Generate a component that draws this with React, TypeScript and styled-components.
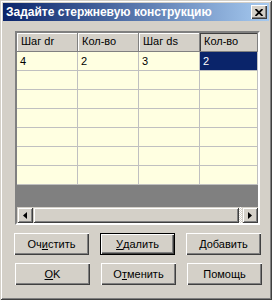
import React from 'react';
import styled, { createGlobalStyle } from 'styled-components';

const Global = createGlobalStyle`
  body {
    margin: 0;
    background: #d4d0c8;
    font-family: 'Liberation Sans', Arial, sans-serif;
    font-size: 11px;
  }
`;

const Window = styled.div`
  width: 272px;
  height: 300px;
  box-sizing: border-box;
  padding: 3px;
  background: #d4d0c8;
  box-shadow: inset 1px 1px #d4d0c8, inset -1px -1px #404040, inset 2px 2px #fff,
    inset -2px -2px #808080;
  display: flex;
  flex-flow: column;
`;

const TitleBar = styled.div`
  height: 18px;
  display: flex;
  align-items: center;
  justify-content: space-between;
  padding: 0 2px 0 3px;
  background: linear-gradient(to right, #0a246a, #a6caf0);
`;

const Title = styled.div`
  color: #fff;
  font-weight: bold;
  font-size: 12px;
  white-space: nowrap;
`;

const CloseButton = styled.div`
  width: 16px;
  height: 14px;
  box-sizing: border-box;
  background: #d4d0c8;
  box-shadow: inset 1px 1px #fff, inset -1px -1px #404040, inset -2px -2px #808080;
  display: flex;
  align-items: center;
  justify-content: center;
`;

const Grid = styled.div`
  margin: 10px 0 0 12px;
  width: 245px;
  height: 194px;
  box-sizing: border-box;
  border-style: solid;
  border-width: 2px;
  border-color: #808080 #fff #fff #808080;
  display: flex;
  flex-flow: column;
  background: #808080;
  position: relative;
`;

const Row = styled.div`
  display: flex;
  height: 19px;
  flex: none;
`;

const HeaderCell = styled.div<{ $w: number; $current?: boolean }>`
  width: ${(p) => p.$w}px;
  box-sizing: border-box;
  padding: 2px 0 0 4px;
  background: #d4d0c8;
  border-right: 1px solid #808080;
  border-bottom: 1px solid #808080;
  box-shadow: ${(p) =>
    p.$current ? 'inset 1px 1px #404040' : 'inset 1px 1px #fff'};
  color: #000;
  white-space: nowrap;
`;

const Cell = styled.div<{ $w: number; $selected?: boolean }>`
  width: ${(p) => p.$w}px;
  box-sizing: border-box;
  padding: 3px 0 0 3px;
  background: ${(p) => (p.$selected ? '#0a246a' : '#ffffe1')};
  color: ${(p) => (p.$selected ? '#fff' : '#000')};
  border-right: 1px solid #c0c0c0;
  border-bottom: 1px solid #c0c0c0;
`;

const Filler = styled.div`
  flex: 1;
  background: #808080;
`;

const ScrollBar = styled.div`
  height: 16px;
  display: flex;
  background: #d4d0c8;
  flex: none;
`;

const ScrollButton = styled.div`
  width: 16px;
  height: 16px;
  box-sizing: border-box;
  background: #d4d0c8;
  box-shadow: inset 1px 1px #d4d0c8, inset -1px -1px #404040, inset 2px 2px #fff,
    inset -2px -2px #808080;
  display: flex;
  align-items: center;
  justify-content: center;
`;

const Thumb = styled.div`
  flex: 1;
  height: 16px;
  box-sizing: border-box;
  box-shadow: inset 1px 1px #d4d0c8, inset -1px -1px #404040, inset 2px 2px #fff,
    inset -2px -2px #808080;
`;

const Dither = styled.div`
  width: 3px;
  background: repeating-conic-gradient(#fff 0 25%, #d4d0c8 0 50%) 0 0 / 2px 2px;
`;

const ButtonRow = styled.div<{ $indent: number; $top: number }>`
  display: flex;
  gap: 11px;
  margin: ${(p) => p.$top}px 0 0 ${(p) => p.$indent}px;
`;

const Button = styled.div<{ $default?: boolean }>`
  width: 75px;
  height: 22px;
  box-sizing: border-box;
  display: flex;
  align-items: center;
  justify-content: center;
  background: #d4d0c8;
  color: #000;
  border: 1px solid ${(p) => (p.$default ? '#000' : 'transparent')};
  box-shadow: ${(p) =>
    p.$default
      ? 'inset 1px 1px #fff, inset -1px -1px #404040, inset -2px -2px #808080'
      : 'none'};
  ${(p) =>
    !p.$default &&
    `border: none; box-shadow: inset 1px 1px #fff, inset -1px -1px #404040, inset -2px -2px #808080;`}
  padding-bottom: 1px;
`;

const Key = styled.span`
  text-decoration: underline;
`;

const widths = [61, 61, 61, 58];
const headers = ['Шаг dr', 'Кол-во', 'Шаг ds', 'Кол-во'];
const firstRow = ['4', '2', '3', '2'];

function Arrow({ dir }: { dir: 'left' | 'right' }): JSX.Element {
  return (
    <svg width="4" height="7" viewBox="0 0 4 7">
      {dir === 'left' ? (
        <polygon points="4,0 0,3.5 4,7" fill="#000" />
      ) : (
        <polygon points="0,0 4,3.5 0,7" fill="#000" />
      )}
    </svg>
  );
}

export default function App(): JSX.Element {
  return (
    <>
      <Global />
      <Window>
        <TitleBar>
          <Title>Задайте стержневую конструкцию</Title>
          <CloseButton>
            <svg width="8" height="7" viewBox="0 0 8 7">
              <path d="M0.5 0 L7.5 7 M7.5 0 L0.5 7" stroke="#000" strokeWidth="1.8" />
            </svg>
          </CloseButton>
        </TitleBar>
        <Grid>
          <Row>
            {headers.map((h, i) => (
              <HeaderCell key={i} $w={widths[i]} $current={i === 3}>
                {h}
              </HeaderCell>
            ))}
          </Row>
          <Row>
            {firstRow.map((v, i) => (
              <Cell key={i} $w={widths[i]} $selected={i === 3}>
                {v}
              </Cell>
            ))}
          </Row>
          {[0, 1, 2, 3, 4, 5].map((r) => (
            <Row key={r}>
              {widths.map((w, i) => (
                <Cell key={i} $w={w} />
              ))}
            </Row>
          ))}
          <Filler />
          <ScrollBar>
            <ScrollButton>
              <Arrow dir="left" />
            </ScrollButton>
            <Thumb />
            <Dither />
            <ScrollButton>
              <Arrow dir="right" />
            </ScrollButton>
          </ScrollBar>
        </Grid>
        <ButtonRow $indent={11} $top={8}>
          <Button>
            Оч<Key>и</Key>стить
          </Button>
          <Button $default>
            <Key>У</Key>далить
          </Button>
          <Button>
            <Key>Д</Key>обавить
          </Button>
        </ButtonRow>
        <ButtonRow $indent={12} $top={8}>
          <Button>
            <Key>O</Key>K
          </Button>
          <Button>
            О<Key>т</Key>менить
          </Button>
          <Button>Помощь</Button>
        </ButtonRow>
      </Window>
    </>
  );
}
